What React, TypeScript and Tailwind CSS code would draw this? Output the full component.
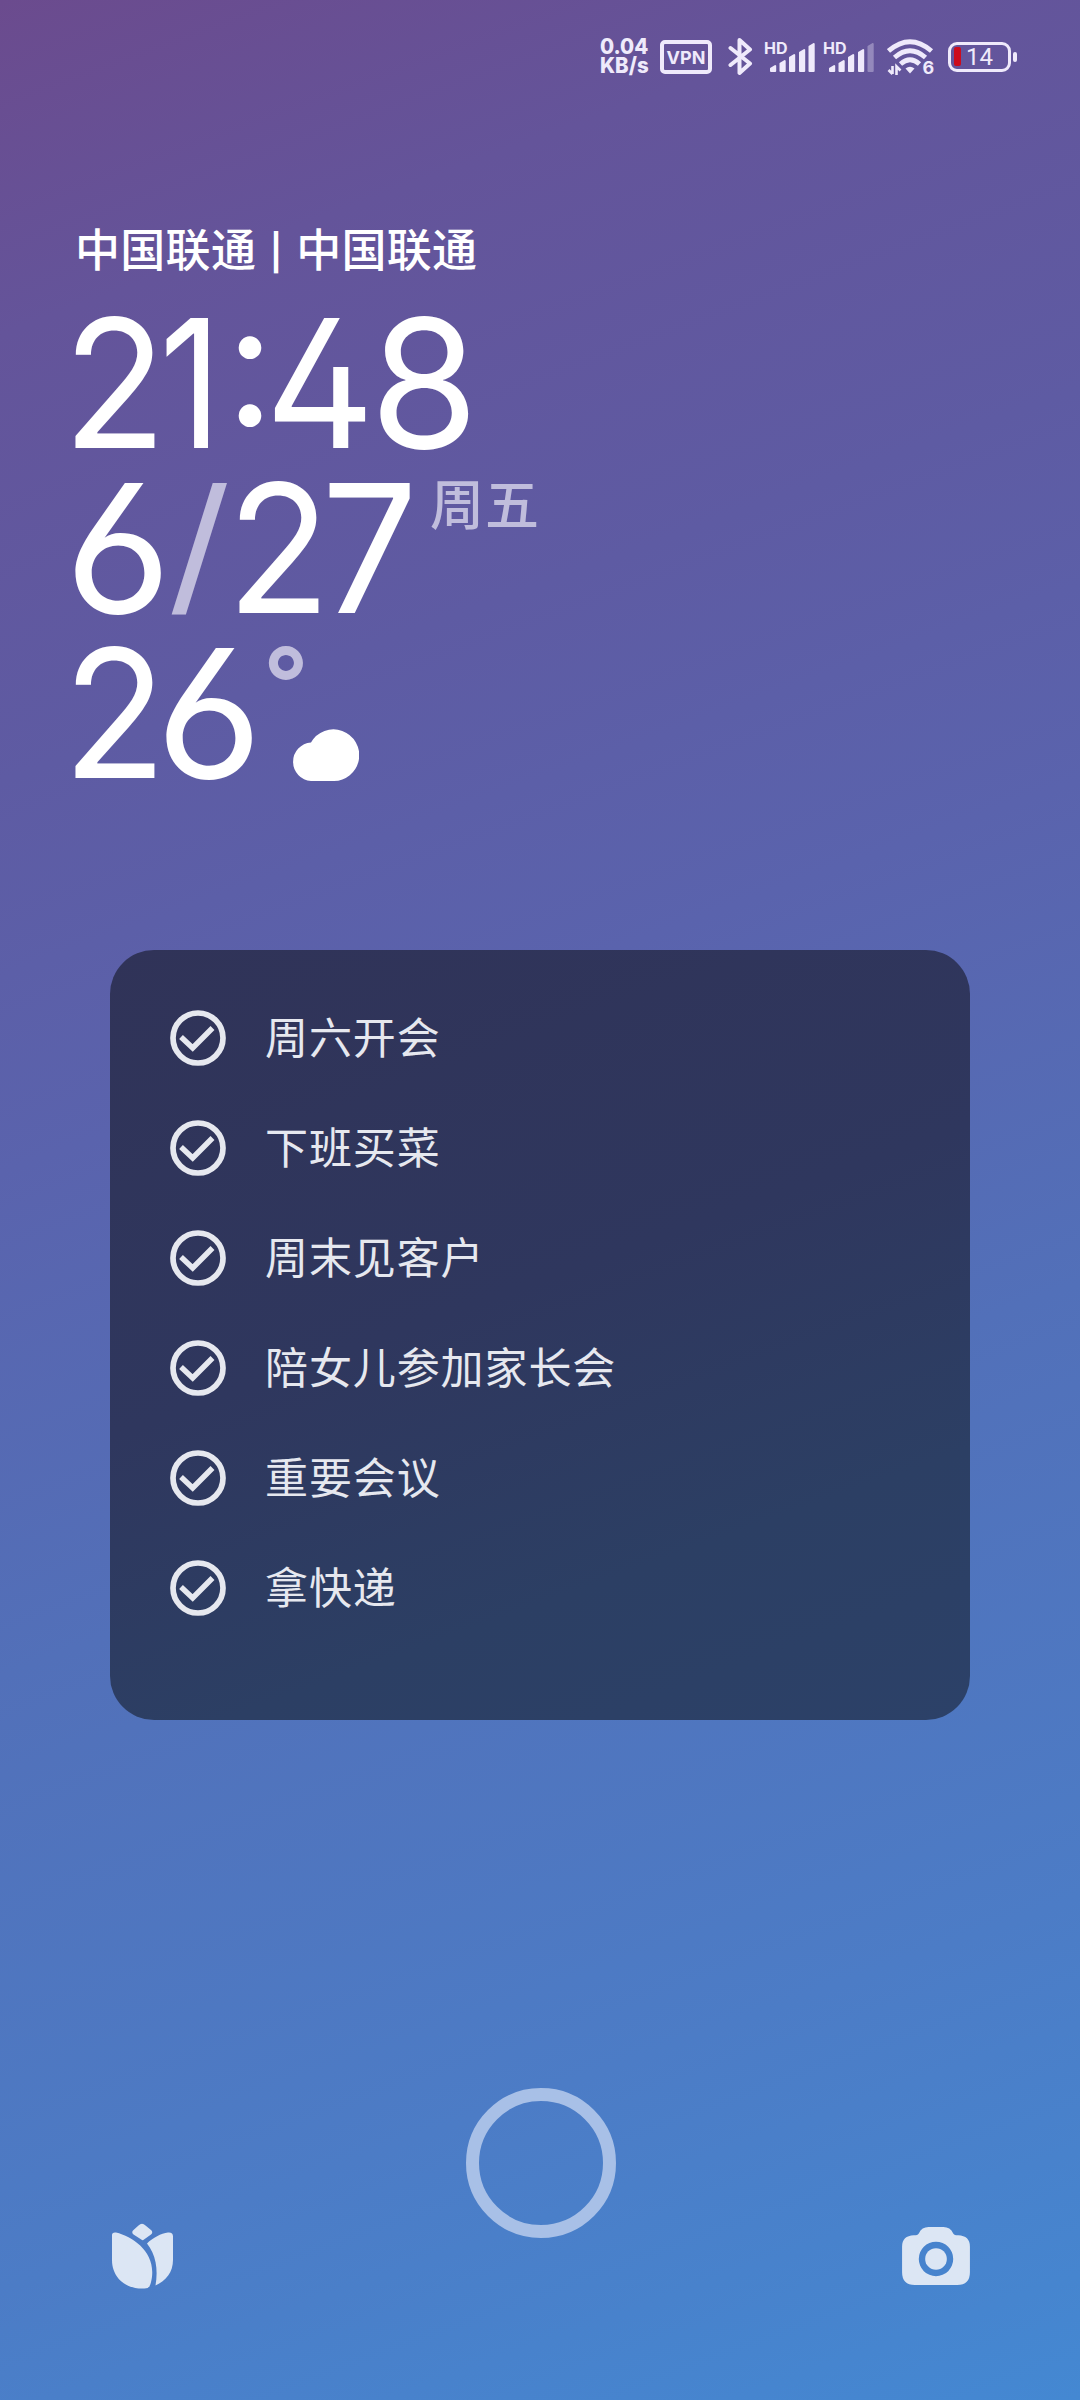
import type { ReactNode } from "react";

const todos = [
  "周六开会",
  "下班买菜",
  "周末见客户",
  "陪女儿参加家长会",
  "重要会议",
  "拿快递",
];

const signalBars = [
  { x: 0, h: 7 },
  { x: 9.5, h: 12 },
  { x: 19, h: 18 },
  { x: 29, h: 23 },
  { x: 38.5, h: 29 },
];

function Signal({ level }: { level: number }) {
  return (
    <div className="relative h-[40px] w-[52px]">
      <span className="absolute left-0 top-[3px] text-[16px] leading-[16px] font-bold">
        HD
      </span>
      <svg
        className="absolute left-[6px] top-[6px]"
        width="46"
        height="30"
        viewBox="0 0 46 30"
        fill="currentColor"
        stroke="currentColor"
        strokeWidth="2"
        strokeLinejoin="round"
      >
        {signalBars.map((bar, i) => (
          <path
            key={bar.x}
            opacity={i < level ? 1 : 0.35}
            d={`M${bar.x + 1} 28V${32.5 - bar.h}l4.2-2.500V28z`}
          />
        ))}
      </svg>
    </div>
  );
}

function StatusBar() {
  return (
    <div className="flex h-[116px] items-start pl-[600px] pt-[37px] text-[#efeafb]">
      <div className="w-[60px] origin-left scale-x-[0.93] text-[22px] leading-[18.5px] font-extrabold">
        <p>0.04</p>
        <p>KB/s</p>
      </div>
      <div className="mt-[3px] flex h-[34px] w-[52px] items-center justify-center rounded-[5px] border-4 border-current text-[18px] font-bold">
        VPN
      </div>
      <svg
        className="ml-4"
        width="25"
        height="39"
        viewBox="0 0 25 39"
        fill="none"
        stroke="currentColor"
        strokeWidth="4"
        strokeLinejoin="round"
        strokeLinecap="round"
      >
        <path d="M2.5 11 22 26.5 11.5 36V3L22 12.5 2.5 28" />
      </svg>
      <div className="ml-[11px]">
        <Signal level={5} />
      </div>
      <div className="ml-[7px]">
        <Signal level={4} />
      </div>
      <div className="relative ml-[12px] h-[40px] w-[48px]">
        <svg
          width="48"
          height="40"
          viewBox="0 0 48 40"
          fill="none"
          stroke="currentColor"
          strokeWidth="4.8"
        >
          <path d="M1.5 14Q23-4.500 44.500 14" />
          <path d="M7.500 20.500Q23 7 38.500 20.500" />
          <path d="M13.500 27Q23 18.500 32.500 27" />
          <path d="M18.500 31.500Q23 28 27.500 31.500L23 36.500z" fill="currentColor" stroke="none" />
          <path d="M5.500 29V37M1.500 33 5.500 37M9.500 38V29.500L13.500 33.500" strokeWidth="2.600" />
        </svg>
        <span className="absolute left-[35.5px] top-[19px] text-[18px] leading-[24px] font-bold">
          6
        </span>
      </div>
      <div className="ml-[13px] mt-[5px] flex items-center">
        <div className="relative flex h-[30px] w-[63px] items-center justify-center rounded-[9px] border-[3.5px] border-current font-[Roboto,sans-serif] text-[24px]">
          <span className="absolute left-[3px] top-[2px] h-[19px] w-[7px] rounded-[2px] bg-[#cc0b1c]" />
          14
        </div>
        <span className="ml-[2px] h-[10px] w-[4px] rounded-full bg-current" />
      </div>
    </div>
  );
}

// One clock character, centred in a fixed cell
function Cell({
  className,
  glyph = "scale-x-[0.95]",
  children,
}: {
  className: string;
  glyph?: string;
  children: ReactNode;
}) {
  return (
    <span className={`flex shrink-0 justify-center ${className}`}>
      <span className={`inline-block ${glyph}`}>{children}</span>
    </span>
  );
}

function Clock() {
  return (
    <div className="pl-[70px] text-[179px] leading-[165px] font-normal text-white [font-feature-settings:'cv03','cv02']">
      <div className="flex h-[165px]">
        <Cell className="w-[89px]">2</Cell>
        <Cell className="w-[62px]" glyph="scale-x-[0.85]">1</Cell>
        <Cell
          className="w-[58px] font-[Lato,sans-serif] text-[180px]"
          glyph="-translate-y-[27px]"
        >
          :
        </Cell>
        <Cell className="w-[81px]">4</Cell>
        <Cell className="w-[128px]" glyph="scale-x-[0.98]">8</Cell>
      </div>
      <div className="flex h-[165px]">
        <Cell className="w-[97px]" glyph="scale-x-[1.03]">6</Cell>
        <Cell
          className="w-[65px] text-[151px] text-[#c0bddc]"
          glyph="-translate-y-[5px] scale-x-[1.16]"
        >
          /
        </Cell>
        <Cell className="w-[94px]">2</Cell>
        <Cell className="w-[87px]">7</Cell>
        <span className="ml-[17px] font-['Noto_Sans_CJK_SC',sans-serif] text-[54px] leading-[72px] font-medium tracking-[1px] text-[#c0bddc]">
          周五
        </span>
      </div>
      <div className="flex h-[165px]">
        <Cell className="w-[89px]">2</Cell>
        <Cell className="w-[101px]" glyph="scale-x-[1.03]">6</Cell>
        <span className="w-[36px] pl-[3px] text-[100px] leading-[104px] font-semibold text-[#c0bddc]">
          °
        </span>
        <svg
          className="ml-[-5px] mt-[98px]"
          width="68"
          height="52"
          viewBox="0 0 68 52"
          fill="currentColor"
        >
          <path d="M20 52A19.300 19.300 0 0 1 20 13.500A25.800 25.800 0 1 1 42 52z" />
        </svg>
      </div>
    </div>
  );
}

function CheckCircle() {
  return (
    <svg width="56" height="56" viewBox="0 0 56 56" fill="none" stroke="currentColor">
      <circle cx="28" cy="28" r="25" strokeWidth="5.700" />
      <path d="M11 27 22.700 38 42.500 18" strokeWidth="5.500" />
    </svg>
  );
}

export default function App() {
  return (
    <div className="flex h-[2400px] w-[1080px] flex-col overflow-hidden bg-[linear-gradient(160deg,#6b4b8e_0%,#64549a_12%,#5e5ba3_28%,#5a63ad_42%,#5270b9_60%,#4c7cc6_82%,#4488d2_100%)] font-[Inter,'Noto_Sans_CJK_SC',sans-serif]">
      <StatusBar />
      <p className="mt-[101px] flex h-[62px] items-center pl-[75px] font-['Noto_Sans_CJK_SC',sans-serif] text-[45px] leading-[62px] font-medium tracking-[0.3px] text-white">
        中国联通
        <span className="w-[40px] pb-[3px] text-center text-[37px] font-black">|</span>
        中国联通
      </p>
      <div className="mt-[22px]">
        <Clock />
      </div>
      <ul className="mx-auto mt-[154px] h-[770px] w-[860px] rounded-[44px] bg-[linear-gradient(160deg,#303358_0%,#2f375e_45%,#2c3f64_75%,#2c4168_100%)] pt-[33px] text-[#e6e8ef]">
        {todos.map((todo) => (
          <li key={todo} className="flex h-[110px] items-center gap-[39px] pl-[60px]">
            <CheckCircle />
            <span className="pb-[7px] font-['Noto_Sans_CJK_SC',sans-serif] text-[43px] leading-[60px] tracking-[0.9px]">
              {todo}
            </span>
          </li>
        ))}
      </ul>
      <div className="mx-[110px] mt-[368px] flex h-[201px] items-end justify-between">
        <svg width="66" height="69" viewBox="0 0 66 69" className="mb-[-3px] ml-[1px]" fill="#dce6f4">
          <path d="M27.500 2.500Q31-1 34.500 2.500L40 7Q42.500 9 40 11.500L33 16.500Q31.500 18 29.500 16L22.500 11.500Q20 9 22.500 7z" />
          <path d="M1 12Q1 9 5 9.500C24 14 48 32 39.500 61Q38.500 65.500 33.500 65.500C14 66.500 1 54 1 37z" />
          <path d="M36 20.500C42 14.500 50 10.500 57 9.500Q62 9 62 13.500V37C62 49 55 58 44.500 62.500C47.500 46 44.500 31 36 20.500z" />
        </svg>
        <div className="mb-[51px] ml-[2px] size-[150px] rounded-full border-[13px] border-[#a8c0e7]" />
        <svg width="68" height="59" viewBox="0 0 69 60" className="mb-[3px]" fill="#dce6f4">
          <path
            fillRule="evenodd"
            d="M12 8.500Q16 8.500 17 6.500Q20 0 27 0H42Q49 0 52 6.500Q53 8.500 57 8.500Q69 9 69 20V46Q69 59 56 59H13Q0 59 0 46V20Q0 9 12 8.500zM34.500 15A17.500 17.500 0 1 0 34.500 50A17.500 17.500 0 1 0 34.500 15z"
          />
          <circle cx="34.500" cy="32.500" r="11" />
        </svg>
      </div>
    </div>
  );
}
